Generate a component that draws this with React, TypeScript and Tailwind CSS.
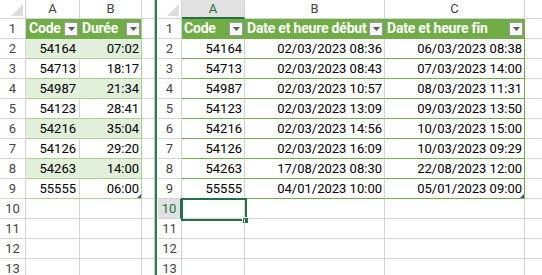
import React from 'react';

const codes = ['54164', '54713', '54987', '54123', '54216', '54126', '54263', '55555'];
const durees = ['07:02', '18:17', '21:34', '28:41', '35:04', '29:20', '14:00', '06:00'];
const debuts = [
  '02/03/2023 08:36',
  '02/03/2023 08:43',
  '02/03/2023 10:57',
  '02/03/2023 13:09',
  '02/03/2023 14:56',
  '02/03/2023 16:09',
  '17/08/2023 08:30',
  '04/01/2023 10:00',
];
const fins = [
  '06/03/2023 08:38',
  '07/03/2023 14:00',
  '08/03/2023 11:31',
  '09/03/2023 13:50',
  '10/03/2023 15:00',
  '10/03/2023 09:29',
  '22/08/2023 12:00',
  '05/01/2023 09:00',
];

// Dropdown filter button of a table header
function DropBtn() {
  return (
    <span className="absolute right-[1px] bottom-[2px] w-[14px] h-[14px] bg-[#f6f6f6] border border-[#9c9c9c] flex items-center justify-center">
      <svg width="7" height="4" viewBox="0 0 7 4">
        <path d="M0 0h7L3.5 4z" fill="#5a5a5a" />
      </svg>
    </span>
  );
}

// Small blue resize handle at the table corner
function ResizeMark() {
  return (
    <svg className="absolute right-0 bottom-0" width="4" height="4" viewBox="0 0 4 4">
      <path d="M4 0V4H0z" fill="#3b4fa8" />
    </svg>
  );
}

function Corner({ w }: { w: string }) {
  return (
    <div className={`${w} h-full shrink-0 border-r border-b border-[#d4d4d4] flex items-end justify-end p-[2px]`}>
      <svg width="12" height="12" viewBox="0 0 12 12">
        <path d="M12 0V12H0z" fill="#dcdcdc" />
      </svg>
    </div>
  );
}

function RowHead({ w, n, active }: { w: string; n: number; active?: boolean }) {
  return (
    <div
      className={`${w} h-full shrink-0 border-b flex items-center justify-center text-[13px] ${
        active
          ? 'bg-[#e1e1e1] text-[#217346] border-r-2 border-r-[#217346] border-b-[#d4d4d4]'
          : 'text-[#444] border-r border-[#d4d4d4]'
      }`}
    >
      {n}
    </div>
  );
}

const headCell = 'relative shrink-0 bg-[#70ad47] border-r border-b text-white font-bold text-[14px] tracking-[-0.2px] flex items-center overflow-hidden whitespace-nowrap';

function LeftPane() {
  return (
    <div className="w-[155px] shrink-0 overflow-hidden border-r border-[#c8c8c8] flex flex-col">
      <div className="h-[7px]" />
      {/* column letters */}
      <div className="flex h-[19px]">
        <Corner w="w-[26px]" />
        <div className="w-[54px] shrink-0 border-r border-b border-[#d4d4d4] flex items-center justify-center text-[13px] text-[#444]">A</div>
        <div className="w-[62px] shrink-0 border-r border-b border-[#d4d4d4] flex items-center justify-center text-[13px] text-[#444]">B</div>
        <div className="flex-1 border-b border-[#d4d4d4]" />
      </div>
      {/* header row */}
      <div className="flex h-[20px]">
        <RowHead w="w-[26px]" n={1} />
        <div className={`${headCell} w-[54px] border-[#70ad47] pl-[3px]`}>
          Code
          <DropBtn />
        </div>
        <div className={`${headCell} w-[62px] border-r-[#a9d08e] border-b-[#70ad47] pl-[2px]`}>
          Durée
          <DropBtn />
        </div>
        <div className="flex-1 border-b border-[#d4d4d4]" />
      </div>
      {codes.map((c, i) => {
        const band = i % 2 === 0;
        return (
          <div key={c} className="flex h-[20px]">
            <RowHead w="w-[26px]" n={i + 2} />
            <div
              className={`w-[54px] shrink-0 border-r border-b border-b-[#a9d08e] text-[13px] text-black flex items-center justify-end pr-[3px] pt-[1px] ${
                band ? 'bg-[#e2efda] border-r-[#e2efda]' : 'border-r-[#d4d4d4]'
              }`}
            >
              {c}
            </div>
            <div
              className={`relative w-[62px] shrink-0 border-r border-b border-[#a9d08e] text-[13px] text-black flex items-center justify-end pr-[2px] pt-[1px] ${
                band ? 'bg-[#e2efda]' : ''
              }`}
            >
              {durees[i]}
              {i === 7 && <ResizeMark />}
            </div>
            <div className="flex-1 border-b border-[#d4d4d4]" />
          </div>
        );
      })}
      {[10, 11, 12, 13].map((n) => (
        <div key={n} className="flex h-[20px] shrink-0">
          <RowHead w="w-[26px]" n={n} />
          <div className="w-[54px] shrink-0 border-r border-b border-[#d4d4d4]" />
          <div className="w-[62px] shrink-0 border-r border-b border-[#d4d4d4]" />
          <div className="flex-1 border-b border-[#d4d4d4]" />
        </div>
      ))}
    </div>
  );
}

function RightPane() {
  return (
    <div className="flex-1 overflow-hidden flex flex-col">
      <div className="h-[7px]" />
      {/* column letters */}
      <div className="flex h-[19px]">
        <Corner w="w-[24px]" />
        <div className="w-[63px] shrink-0 bg-[#e1e1e1] border-r border-[#d4d4d4] border-b-2 border-b-[#217346] flex items-center justify-center text-[13px] text-[#217346]">A</div>
        <div className="w-[140px] shrink-0 border-r border-b border-[#d4d4d4] flex items-center justify-center text-[13px] text-[#444]">B</div>
        <div className="w-[140px] shrink-0 border-r border-b border-[#d4d4d4] flex items-center justify-center text-[13px] text-[#444]">C</div>
        <div className="flex-1 border-b border-[#d4d4d4]" />
      </div>
      {/* header row */}
      <div className="flex h-[20px]">
        <RowHead w="w-[24px]" n={1} />
        <div className={`${headCell} w-[63px] border-[#70ad47] pl-[2px]`}>
          Code
          <DropBtn />
        </div>
        <div className={`${headCell} w-[140px] border-[#70ad47] pl-[2px]`}>
          Date et heure début
          <DropBtn />
        </div>
        <div className={`${headCell} w-[140px] border-[#70ad47] pl-[2px]`}>
          Date et heure fin
          <DropBtn />
        </div>
        <div className="flex-1 border-b border-[#d4d4d4]" />
      </div>
      {codes.map((c, i) => (
        <div key={c} className="flex h-[20px]">
          <RowHead w="w-[24px]" n={i + 2} />
          <div className="w-[63px] shrink-0 border-r border-b border-r-[#d4d4d4] border-b-[#70ad47] text-[13px] text-black flex items-center justify-end pr-[2px] pt-[1px]">
            {c}
          </div>
          <div className="w-[140px] shrink-0 border-r border-b border-r-[#d4d4d4] border-b-[#70ad47] text-[13px] text-black flex items-center justify-end pr-[2px] pt-[1px]">
            {debuts[i]}
          </div>
          <div className="relative w-[140px] shrink-0 border-r border-b border-[#70ad47] text-[13px] text-black flex items-center justify-end pr-[2px] pt-[1px]">
            {fins[i]}
            {i === 7 && <ResizeMark />}
          </div>
          <div className="flex-1 border-b border-[#d4d4d4]" />
        </div>
      ))}
      {[10, 11, 12, 13].map((n) => (
        <div key={n} className="flex h-[20px] shrink-0">
          <RowHead w="w-[24px]" n={n} active={n === 10} />
          <div className="relative w-[63px] shrink-0 border-r border-b border-[#d4d4d4]">
            {n === 10 && (
              <>
                <div className="absolute left-[-1px] top-[-1px] w-[66px] h-[23px] border-2 border-[#217346]" />
                <div className="absolute left-[60px] top-[18px] w-[5px] h-[5px] bg-[#217346] border border-white box-content" />
              </>
            )}
          </div>
          <div className="w-[140px] shrink-0 border-r border-b border-[#d4d4d4]" />
          <div className="w-[140px] shrink-0 border-r border-b border-[#d4d4d4]" />
          <div className="flex-1 border-b border-[#d4d4d4]" />
        </div>
      ))}
    </div>
  );
}

export default function App() {
  return (
    <div className="w-[542px] h-[275px] overflow-hidden bg-white flex font-['Roboto',sans-serif]">
      <LeftPane />
      <div className="w-[2px] shrink-0 bg-[#2a7d4f]" />
      <div className="w-[1px] shrink-0 bg-white" />
      <RightPane />
    </div>
  );
}
